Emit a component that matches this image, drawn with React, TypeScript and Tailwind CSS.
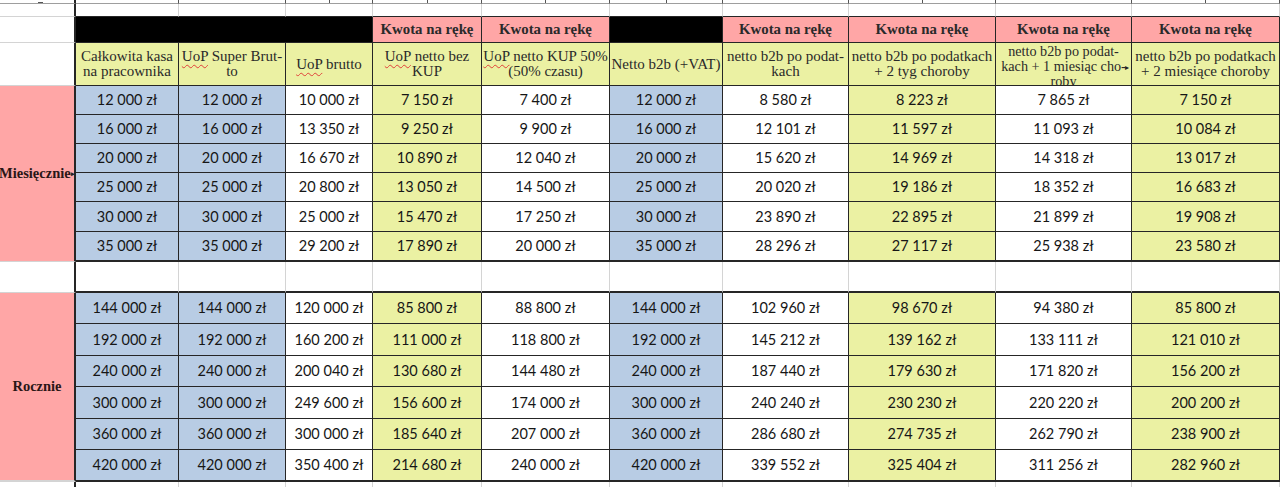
import type { ReactNode } from 'react'

type Fill = 'b' | 'w' | 'y'

const fills: Fill[] = ['b', 'b', 'w', 'y', 'w', 'b', 'w', 'y', 'w', 'y']
const bg: Record<Fill, string> = {
  b: 'bg-[#b8cce4]',
  w: 'bg-white',
  y: 'bg-[#ebf1a3]',
}

const monthly: string[][] = [
  ['12 000', '12 000', '10 000', '7 150', '7 400', '12 000', '8 580', '8 223', '7 865', '7 150'],
  ['16 000', '16 000', '13 350', '9 250', '9 900', '16 000', '12 101', '11 597', '11 093', '10 084'],
  ['20 000', '20 000', '16 670', '10 890', '12 040', '20 000', '15 620', '14 969', '14 318', '13 017'],
  ['25 000', '25 000', '20 800', '13 050', '14 500', '25 000', '20 020', '19 186', '18 352', '16 683'],
  ['30 000', '30 000', '25 000', '15 470', '17 250', '30 000', '23 890', '22 895', '21 899', '19 908'],
  ['35 000', '35 000', '29 200', '17 890', '20 000', '35 000', '28 296', '27 117', '25 938', '23 580'],
]

const yearly: string[][] = [
  ['144 000', '144 000', '120 000', '85 800', '88 800', '144 000', '102 960', '98 670', '94 380', '85 800'],
  ['192 000', '192 000', '160 200', '111 000', '118 800', '192 000', '145 212', '139 162', '133 111', '121 010'],
  ['240 000', '240 000', '200 040', '130 680', '144 480', '240 000', '187 440', '179 630', '171 820', '156 200'],
  ['300 000', '300 000', '249 600', '156 600', '174 000', '300 000', '240 240', '230 230', '220 220', '200 200'],
  ['360 000', '360 000', '300 000', '185 640', '207 000', '360 000', '286 680', '274 735', '262 790', '238 900'],
  ['420 000', '420 000', '350 400', '214 680', '240 000', '420 000', '339 552', '325 404', '311 256', '282 960'],
]

// red spell-check squiggle under "UoP"
function Uop() {
  return <span className="underline decoration-wavy decoration-[#e0403a] decoration-1 underline-offset-[3px]">UoP</span>
}

function Head({ children, className = '' }: { children: ReactNode; className?: string }) {
  return (
    <div className={`flex flex-col items-center justify-center overflow-hidden border-r border-b border-[#262626] bg-[#ebf1a3] text-center leading-[15px] ${className}`}>
      {children}
    </div>
  )
}

function Kwota() {
  return (
    <div className="flex items-center justify-center border-r border-b border-[#262626] bg-[#ffa6a6] font-bold">
      Kwota na rękę
    </div>
  )
}

function Rows({ data }: { data: string[][] }) {
  return (
    <>
      {data.map((row, r) =>
        row.map((v, i) => (
          <div
            key={`${r}-${i}`}
            className={`flex items-center justify-center border-r border-[#262626] ${r === data.length - 1 ? 'border-b-2' : 'border-b'} ${bg[fills[i]]}`}
          >
            {v} zł
          </div>
        ))
      )}
    </>
  )
}

export default function App() {
  const cols = Array.from({ length: 10 })
  // tiny bits of the row above that peek into view
  const marks = [false, false, true, true, true, true, false, true, false, true]

  return (
    <div className="w-[1280px] h-[487px] overflow-hidden bg-white text-[#161616]">
      <div className="grid grid-cols-[76px_103px_107px_87px_109px_128px_113px_126px_147px_136px_148px] grid-rows-[4px_13px_26px_43px_29px_29px_29px_29px_30px_30px_31px_31px_32px_31px_32px_31px_32px_5px] font-[Lato,sans-serif] text-[14.5px]">
        {/* cut-off row above */}
        <div className="flex justify-start border-r-2 border-b border-r-[#262626] border-b-[#9e9e9e] pl-[38px]">
          <span className="h-[3px] w-[5px] border-b border-[#555]" />
        </div>
        {cols.map((_, i) => (
          <div key={`t${i}`} className="flex justify-center border-r border-b border-r-[#555] border-b-[#9e9e9e]">
            {marks[i] && <span className="h-[3px] w-[1px] bg-[#555]" />}
          </div>
        ))}

        {/* empty row */}
        <div className="border-r-2 border-b border-r-[#262626] border-b-[#d4d4d4]" />
        {cols.map((_, i) => (
          <div key={`e${i}`} className="border-r border-b border-r-[#d4d4d4] border-b-[#262626]" />
        ))}

        {/* header row 1 */}
        <div className="border-r-2 border-b border-r-[#262626] border-b-[#d4d4d4]" />
        <div className="col-span-3 border-r border-b border-[#262626] bg-black" />
        <div className="contents font-['Liberation_Serif',serif] text-[14.8px] text-[#2a2a2a]">
          <Kwota />
          <Kwota />
        </div>
        <div className="border-r border-b border-[#262626] bg-black" />
        <div className="contents font-['Liberation_Serif',serif] text-[14.8px] text-[#2a2a2a]">
          <Kwota />
          <Kwota />
          <Kwota />
          <Kwota />
        </div>

        {/* header row 2 */}
        <div className="border-r-2 border-b border-r-[#262626] border-b-[#d4d4d4]" />
        <div className="contents font-['Liberation_Serif',serif] text-[15px] text-[#2a2a2a]">
          <Head>
            <span>Całkowita kasa</span>
            <span>na pracownika</span>
          </Head>
          <Head>
            <span>
              <Uop /> Super Brut-
            </span>
            <span>to</span>
          </Head>
          <Head>
            <span>
              <Uop /> brutto
            </span>
          </Head>
          <Head>
            <span>
              <Uop /> netto bez
            </span>
            <span>KUP</span>
          </Head>
          <Head>
            <span>
              <Uop /> netto KUP 50%
            </span>
            <span>(50% czasu)</span>
          </Head>
          <Head>
            <span>Netto b2b (+VAT)</span>
          </Head>
          <Head>
            <span>netto b2b po podat-</span>
            <span>kach</span>
          </Head>
          <Head>
            <span>netto b2b po podatkach</span>
            <span>+ 2 tyg choroby</span>
          </Head>
          <Head className="relative !justify-start whitespace-nowrap pt-[1px] text-[14.2px] leading-[14px]">
            <span>netto b2b po podat-</span>
            <span>kach + 1 miesiąc cho-</span>
            <span>roby</span>
            <span className="absolute right-[2px] top-[17px] text-[8px] text-[#222]">▸</span>
          </Head>
          <Head>
            <span>netto b2b po podatkach</span>
            <span>+ 2 miesiące choroby</span>
          </Head>
        </div>

        {/* monthly */}
        <div className="relative row-span-6 flex items-center border-r-2 border-b border-r-[#262626] border-b-[#d4d4d4] bg-[#ffa6a6] font-['Liberation_Serif',serif] text-[14.5px] font-bold text-[#2a1616]">
          <span className="-ml-[1px]">Miesięcznie</span>
          <span className="absolute right-[-1px] top-[83px] text-[7px] text-[#222]">▸</span>
        </div>
        <Rows data={monthly} />

        {/* gap row */}
        <div className="border-r-2 border-b border-r-[#262626] border-b-[#d4d4d4]" />
        {cols.map((_, i) => (
          <div key={`g${i}`} className="border-r border-b-2 border-r-[#d4d4d4] border-b-[#262626]" />
        ))}

        {/* yearly */}
        <div className="row-span-6 flex items-center justify-center border-r-2 border-b-2 border-r-[#262626] border-b-[#d4d4d4] bg-[#ffa6a6] font-['Liberation_Serif',serif] text-[14.5px] font-bold text-[#2a1616]">
          Rocznie
        </div>
        <Rows data={yearly} />

        {/* row below */}
        <div className="border-r-2 border-r-[#262626]" />
        {cols.map((_, i) => (
          <div key={`b${i}`} className="border-r border-r-[#d4d4d4]" />
        ))}
      </div>
    </div>
  )
}
